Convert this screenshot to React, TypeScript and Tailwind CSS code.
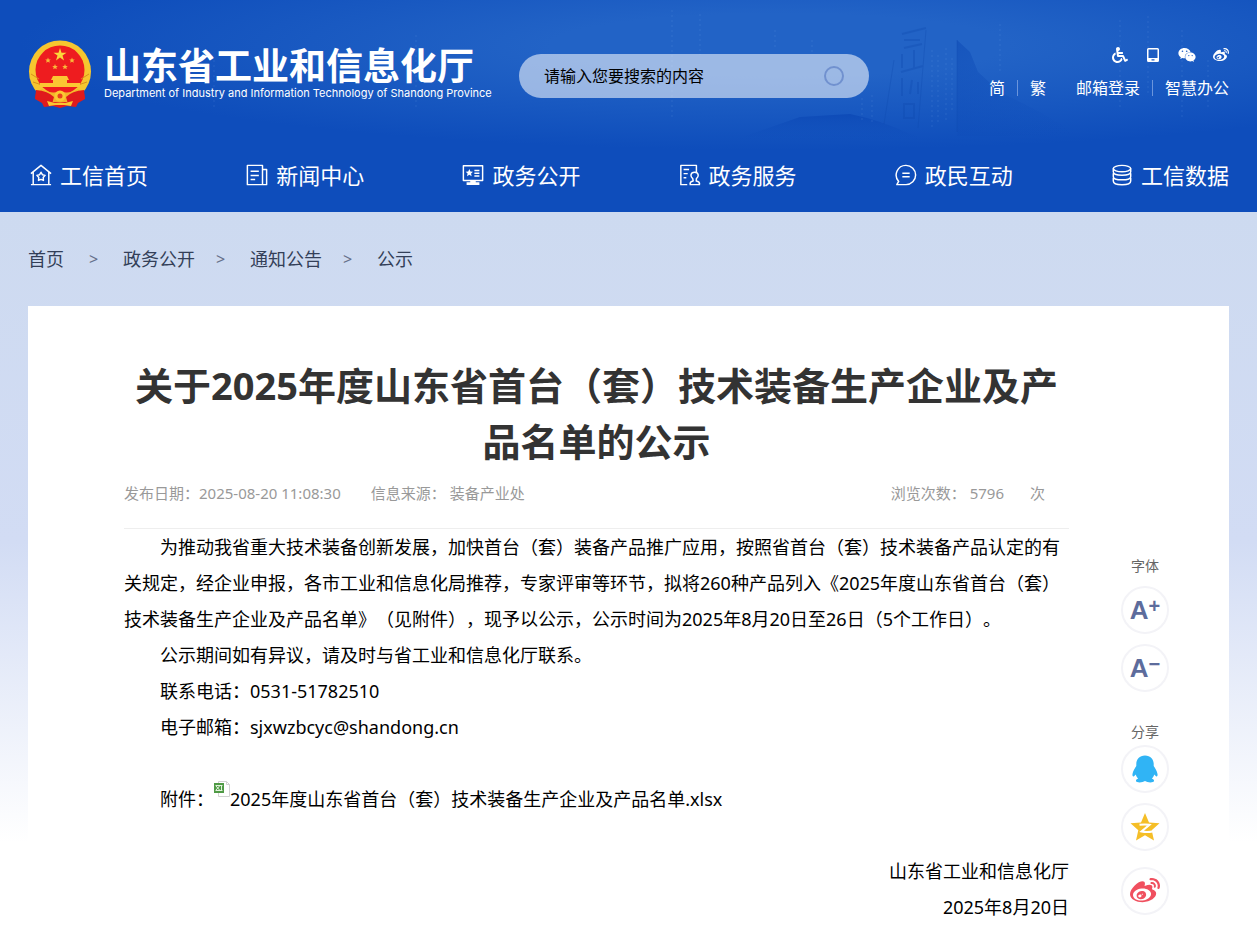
import * as React from 'react'
import { FaWeibo, FaWeixin, FaWheelchair } from 'react-icons/fa'

interface IconProps {
  className?: string
}

function Emblem({ className }: IconProps) {
  return (
    <svg viewBox="0 0 64 70" className={className} aria-hidden="true">
      <path d="M9 48 L7 59 L14 63 L16 67 L25 66 L32 68 L39 66 L48 67 L50 63 L57 59 L55 48 Z" fill="#e01a1c" />
      <circle cx="32" cy="31.500" r="31" fill="#f6c62f" />
      <circle cx="32" cy="30" r="24.500" fill="#ee1c1f" />
      <path d="M3 34 l8 5 M5 42 l9 3 M61 34 l-8 5 M59 42 l-9 3" stroke="#d9901c" strokeWidth="1" />
      <polygon points="32,8 33.500,12.700 38.500,12.700 34.500,15.600 36,20.400 32,17.500 28,20.400 29.500,15.600 25.500,12.700 30.500,12.700" fill="#fbd93b" />
      <g fill="#f9b93a">
        <path d="M20 17.500 l.8 1.900 2 .1 -1.500 1.300 .5 2 -1.800 -1.100 -1.800 1.100 .5 -2 -1.500 -1.300 2 -.1z" />
        <path d="M44 17.500 l.8 1.900 2 .1 -1.500 1.300 .5 2 -1.800 -1.100 -1.800 1.100 .5 -2 -1.500 -1.300 2 -.1z" />
        <path d="M27 24 l.8 1.900 2 .1 -1.500 1.300 .5 2 -1.800 -1.100 -1.800 1.100 .5 -2 -1.500 -1.300 2 -.1z" />
        <path d="M37 24 l.8 1.900 2 .1 -1.500 1.300 .5 2 -1.800 -1.100 -1.800 1.100 .5 -2 -1.500 -1.300 2 -.1z" />
      </g>
      <path d="M25 36 h14 l2 4 h-2 v3 h13 v4 H12 v-4 h13 v-3 h-2 z" fill="#fbc832" />
      <path d="M14 49 Q24 55 32 51 Q40 55 50 49 L54 54 Q42 57 39 62 H25 Q22 57 10 54 Z" fill="#f3b52b" />
      <path d="M8 50 Q20 51 26 57 L24 64 Q16 58 7 59 Z M56 50 Q44 51 38 57 L40 64 Q48 58 57 59 Z" fill="#e01a1c" />
      <circle cx="32" cy="56" r="5.500" fill="#fbc832" />
      <circle cx="32" cy="56" r="2.500" fill="#e8401f" />
      <path d="M19 61 l8 2 h10 l8 -2 -2 5 -7 -1 h-8 l-7 1z" fill="#fbc832" />
    </svg>
  )
}

// 页头背景里的石碑和山
function HeaderScene({ className }: IconProps) {
  return (
    <svg viewBox="0 0 1257 140" preserveAspectRatio="xMidYMin slice" className={className} aria-hidden="true">
      <defs>
        <linearGradient id="hill" x1="0" y1="0" x2="0" y2="1">
          <stop offset="0" stopColor="#0a46b4" stopOpacity=".7" />
          <stop offset="1" stopColor="#0e4dbb" stopOpacity="0" />
        </linearGradient>
        <linearGradient id="peak" x1="0" y1="0" x2="1" y2="1">
          <stop offset="0" stopColor="#0b48b4" stopOpacity=".5" />
          <stop offset="1" stopColor="#0e4dbb" stopOpacity="0" />
        </linearGradient>
      </defs>
      <path d="M740 138 Q780 124 800 117 L850 114 Q880 120 910 134 L930 140 H740 Z" fill="url(#hill)" />
      <path d="M957 40 L970 52 L978 72 L1000 92 L1040 112 L1080 136 H957 Z" fill="url(#peak)" />
      <g stroke="#0d48ae" strokeWidth="2" opacity=".3" fill="none">
        <path d="M902 34 l24 -6 M904 40 h16 M904 48 l18 -4 M902 54 v14 M914 50 v18 M901 72 l22 -6 M902 78 v18 M912 80 l-2 14 M918 82 v12 M904 104 h10 v14 h-10z" />
        <path d="M926 30 L918 128 M894 60 L884 124 M957 40 V132" strokeWidth="1" />
      </g>
      <g stroke="#7fb0f0" strokeDasharray="2 3" opacity=".16">
        <path d="M214 60 V110 M416 35 V110 M672 10 V120 M700 14 V55 M775 30 V50 M812 40 V54 M862 98 V122 M872 95 V124 M932 50 V130 M938 55 V125 M946 48 V120 M952 58 V112 M1000 24 V74 M1120 20 V110 M1148 16 V96 M1182 30 V120 M1208 60 V110" />
      </g>
    </svg>
  )
}

const stroke = {
  viewBox: '0 0 24 24',
  fill: 'none',
  stroke: 'currentColor',
  strokeWidth: 1.6,
  strokeLinejoin: 'round' as const,
  'aria-hidden': true,
}

function HomeIcon({ className }: IconProps) {
  return (
    <svg {...stroke} className={className}>
      <path d="M1 10.500 L12 1.500 L23 10.500 M3.500 8.500 V22 M20.500 8.500 V22 M1 22.500 H6 M18 22.500 H23 M6 22.500 H18" />
      <path d="M12 9 l1.500 2.700 3 .7 -2.100 2.300 .3 3.200 -2.700 -1.200 -2.700 1.200 .3 -3.200 -2.100 -2.300 3 -.7z" />
    </svg>
  )
}

function NewsIcon({ className }: IconProps) {
  return (
    <svg {...stroke} className={className}>
      <path d="M1.500 1.500 H18 V22.500 H1.500 Z M18 6 H22.500 V22.500 H18 M5 8 H14 M5 12.500 H14 M5 17 H10" />
    </svg>
  )
}

function OpenIcon({ className }: IconProps) {
  return (
    <svg {...stroke} className={className}>
      <path d="M1.500 2 H22.500 V18 H1.500 Z M13.500 7 H19 M13.500 10 H19 M13.500 13 H19" />
      <path d="M8 5.500 l1.200 2.700 2.800 .3 -2.100 1.900 .6 2.900 -2.500 -1.500 -2.500 1.500 .6 -2.900 -2.100 -1.900 2.800 -.3z M9 18 h6 v2 h4 v3 H5 v-3 h4z" fill="currentColor" stroke="none" />
    </svg>
  )
}

function ServiceIcon({ className }: IconProps) {
  return (
    <svg {...stroke} className={className}>
      <path d="M9 22.500 H2 V1.500 H19 V9 M5 6 H11 M5 10.500 H9.500 M5 15 H8 M11.500 22.500 H23 M12 22 Q12 19 15.500 18.500 L15 16 Q13 14.500 13 12 Q13.500 9 17 9 Q20.500 9 21 12 Q21 14.500 19 16 L18.800 18.500 Q22.500 19 22.500 22" />
    </svg>
  )
}

function ChatIcon({ className }: IconProps) {
  return (
    <svg {...stroke} className={className}>
      <path d="M12 1.500 A10.500 10.500 0 1 1 12 22.500 H2 L4 19 A10.500 10.500 0 0 1 12 1.500 Z M8 10 H16 M8 14 H16" />
    </svg>
  )
}

function DataIcon({ className }: IconProps) {
  return (
    <svg {...stroke} className={className}>
      <ellipse cx="12" cy="5" rx="9.500" ry="3.500" />
      <path d="M2.500 5 V8.500 C2.500 13.500 21.500 13.500 21.500 8.500 V5 M2.500 10 V13.500 C2.500 18.500 21.500 18.500 21.500 13.500 V10 M2.500 15 V18.500 C2.500 24 21.500 24 21.500 18.500 V15" />
    </svg>
  )
}

function TabletIcon({ className }: IconProps) {
  return (
    <svg viewBox="0 0 16 16" className={className} aria-hidden="true">
      <path fill="currentColor" fillRule="evenodd" d="M3.500 1 h9 a1.500 1.500 0 0 1 1.500 1.500 v11 a1.500 1.500 0 0 1 -1.500 1.500 h-9 a1.500 1.500 0 0 1 -1.500 -1.500 v-11 a1.500 1.500 0 0 1 1.500 -1.500z M3.500 2.500 v8.500 h9 v-8.500z M6.500 12.300 v1.200 h3 v-1.200z" />
    </svg>
  )
}

function QqIcon({ className }: IconProps) {
  return (
    <svg viewBox="0 0 28 28" className={className} aria-hidden="true">
      <path
        fill="#30b4f5"
        d="M14 0.500 C8.500 0.500 5.300 4.500 5.300 9 L5.300 11 C3.800 13 2 16 1.500 19 C1.200 21 2 22 3 21.300 L4.800 19.500 C5.200 21.300 6 22.600 7.200 23.600 C5.500 24.200 4.800 25 5 26 C5.500 28 11.500 27.800 14 26 C16.500 27.800 22.500 28 23 26 C23.200 25 22.500 24.200 20.800 23.600 C22 22.600 22.800 21.300 23.200 19.500 L25 21.300 C26 22 26.800 21 26.500 19 C26 16 24.200 13 22.700 11 L22.700 9 C22.700 4.500 19.500 0.500 14 0.500 Z"
      />
    </svg>
  )
}

function QzoneIcon({ className }: IconProps) {
  return (
    <svg viewBox="0 0 30 30" className={className} aria-hidden="true">
      <polygon points="15,1 19,10.500 29.500,11.300 21.700,18.300 24,28.500 15,23.200 6,28.500 8.300,18.300 0.500,11.300 11,10.500" fill="#f5be27" />
      <path d="M9.500 12.800 Q15 12 19.500 12.800 L11.500 19.500 Q17 20.500 22.500 19.500" fill="none" stroke="#fff" strokeWidth="2" />
    </svg>
  )
}

function SheetIcon({ className }: IconProps) {
  return (
    <svg viewBox="0 0 16 16" className={className} aria-hidden="true">
      <path d="M4.500 .5 h8 l3 3 v12 h-11z" fill="#fff" stroke="#d2d2d2" />
      <path d="M12.500 .5 v3 h3" fill="none" stroke="#d2d2d2" />
      <rect y="2" width="10" height="10" fill="#4f9a45" />
      <path d="M1.500 4.500 h7 M1.500 9.500 h7 M2 5 l3.500 4 M5.500 5 l-3.500 4 M7.500 5 v4" stroke="#e3f3dd" />
    </svg>
  )
}

const navItems = [
  { label: '工信首页', icon: HomeIcon },
  { label: '新闻中心', icon: NewsIcon },
  { label: '政务公开', icon: OpenIcon },
  { label: '政务服务', icon: ServiceIcon },
  { label: '政民互动', icon: ChatIcon },
  { label: '工信数据', icon: DataIcon },
]

const crumbs = ['首页', '政务公开', '通知公告', '公示']

function Header() {
  return (
    <header className="relative bg-[#0e4dbb] bg-[radial-gradient(ellipse_760px_105px_at_62%_45px,#2263c6_30%,#0e4dbb00)] text-white">
      <HeaderScene className="pointer-events-none absolute inset-x-0 top-0 h-[140px] w-full" />
      <div className="relative flex h-[140px] items-start px-7">
        <a href="#" className="flex pt-10">
          <Emblem className="h-[70px] w-16" />
          <span className="ml-3 flex w-[378px] flex-col pt-[10px]">
            <span className="font-['Liberation_Sans','Noto_Sans_CJK_SC',sans-serif] text-[37px] leading-9 font-bold whitespace-nowrap">
              山东省工业和信息化厅
            </span>
            <span className="font-[Inter,sans-serif] text-[11px] leading-[14px] whitespace-nowrap">
              Department of Industry and Information Technology of Shandong Province
            </span>
          </span>
        </a>
        <form className="mt-[54px] ml-[37px] flex h-11 w-[350px] items-center rounded-full bg-white/55 px-[25px]">
          <input
            type="text"
            aria-label="搜索"
            placeholder="请输入您要搜索的内容"
            className="min-w-0 flex-1 bg-transparent text-base text-black outline-none placeholder:text-black"
          />
          <button type="button" aria-label="搜索" className="size-5 rounded-full border-2 border-[#7191cf]" />
        </form>
        <div className="ml-auto flex flex-col items-end pt-[46px]">
          <div className="flex items-center gap-[17px]">
            <a href="#" aria-label="无障碍"><FaWheelchair className="size-4" /></a>
            <a href="#" aria-label="移动版"><TabletIcon className="size-4" /></a>
            <a href="#" aria-label="微信"><FaWeixin className="size-[18px]" /></a>
            <a href="#" aria-label="微博"><FaWeibo className="size-4" /></a>
          </div>
          <div className="mt-3 flex items-center text-base leading-6 whitespace-nowrap">
            <a href="#">简</a>
            <span className="mx-3 h-4 w-px bg-[#6b95dc]" />
            <a href="#">繁</a>
            <a href="#" className="ml-[30px]">邮箱登录</a>
            <span className="mx-3 h-4 w-px bg-[#6b95dc]" />
            <a href="#">智慧办公</a>
          </div>
        </div>
      </div>
      <nav className="relative flex h-[72px] items-center justify-between px-7 pb-[2px]">
        {navItems.map(({ label, icon: Icon }) => (
          <a key={label} href="#" className="flex items-center gap-2 text-[22px] whitespace-nowrap">
            <Icon className="ml-[2px] size-[22px]" />
            {label}
          </a>
        ))}
      </nav>
    </header>
  )
}

const circle = 'flex size-12 items-center justify-center rounded-full border-2 border-[#f3f3f7] bg-white'

function Sidebar() {
  return (
    <aside className="flex w-40 shrink-0 flex-col items-center pt-[250px] pr-2 text-sm text-[#666]">
      <span>字体</span>
      <button
        type="button"
        aria-label="放大字体"
        className={`${circle} mt-[10px] font-['Liberation_Sans',sans-serif] text-[26px] leading-7 font-bold text-[#5d6c9c]`}
      >
        A<span className="pb-2 text-xl leading-5">+</span>
      </button>
      <button
        type="button"
        aria-label="缩小字体"
        className={`${circle} mt-[10px] font-['Liberation_Sans',sans-serif] text-[26px] leading-7 font-bold text-[#5d6c9c]`}
      >
        A<span className="pb-2 text-xl leading-5">−</span>
      </button>
      <span className="mt-[30px]">分享</span>
      <button type="button" aria-label="分享到QQ" className={`${circle} mt-[3px]`}>
        <QqIcon className="size-7" />
      </button>
      <button type="button" aria-label="分享到QQ空间" className={`${circle} mt-[10px]`}>
        <QzoneIcon className="size-[30px]" />
      </button>
      <button type="button" aria-label="分享到微博" className={`${circle} mt-4`}>
        <FaWeibo className="size-[30px] text-[#f0505f]" />
      </button>
    </aside>
  )
}

function Article() {
  return (
    <article className="min-w-0 flex-1">
      <h1 className="pt-[51px] text-center text-[38px] leading-14 font-bold text-[#333]">
        关于2025年度山东省首台（套）技术装备生产企业及产品名单的公示
      </h1>
      <div className="flex items-center border-b border-[#eee] pt-3 pb-[22px] text-[15px] leading-[25px] text-[#999]">
        <span>发布日期：2025-08-20 11:08:30</span>
        <span className="ml-[30px]">信息来源：</span>
        <span className="ml-1">装备产业处</span>
        <span className="ml-auto">浏览次数：</span>
        <span className="ml-1">5796</span>
        <span className="mr-6 ml-[26px]">次</span>
      </div>
      <div className="text-lg leading-9 text-black">
        <p className="indent-9">
          为推动我省重大技术装备创新发展，加快首台（套）装备产品推广应用，按照省首台（套）技术装备产品认定的有关规定，经企业申报，各市工业和信息化局推荐，专家评审等环节，拟将260种产品列入《2025年度山东省首台（套）技术装备生产企业及产品名单》（见附件），现予以公示，公示时间为2025年8月20日至26日（5个工作日）。
        </p>
        <p className="indent-9">公示期间如有异议，请及时与省工业和信息化厅联系。</p>
        <p className="indent-9">联系电话：0531-51782510</p>
        <p className="indent-9">电子邮箱：sjxwzbcyc@shandong.cn</p>
        <p className="mt-9 flex pl-9">
          附件：
          <SheetIcon className="size-4" />
          <a href="#">2025年度山东省首台（套）技术装备生产企业及产品名单.xlsx</a>
        </p>
        <p className="mt-9 text-right">山东省工业和信息化厅</p>
        <p className="text-right">2025年8月20日</p>
      </div>
    </article>
  )
}

export default function App() {
  return (
    <div className="bg-white font-['Noto_Sans','Noto_Sans_CJK_SC',sans-serif] [text-spacing-trim:space-all]">
      <Header />
      <main className="bg-[linear-gradient(#cddaf0_0,#d2dcf4_330px,#ffffff_630px)] px-7 pb-2">
        <nav aria-label="当前位置" className="flex h-[94px] items-center text-lg text-[#333f58]">
          {crumbs.map((crumb, i) => (
            <React.Fragment key={crumb}>
              {i > 0 && (
                <span className={`text-center text-base text-[#66708a] ${i === 1 ? 'w-[59px]' : 'w-[55px] pr-1'}`}>
                  &gt;
                </span>
              )}
              <a href="#">{crumb}</a>
            </React.Fragment>
          ))}
        </nav>
        <div className="flex bg-white pl-24">
          <Article />
          <Sidebar />
        </div>
      </main>
    </div>
  )
}
